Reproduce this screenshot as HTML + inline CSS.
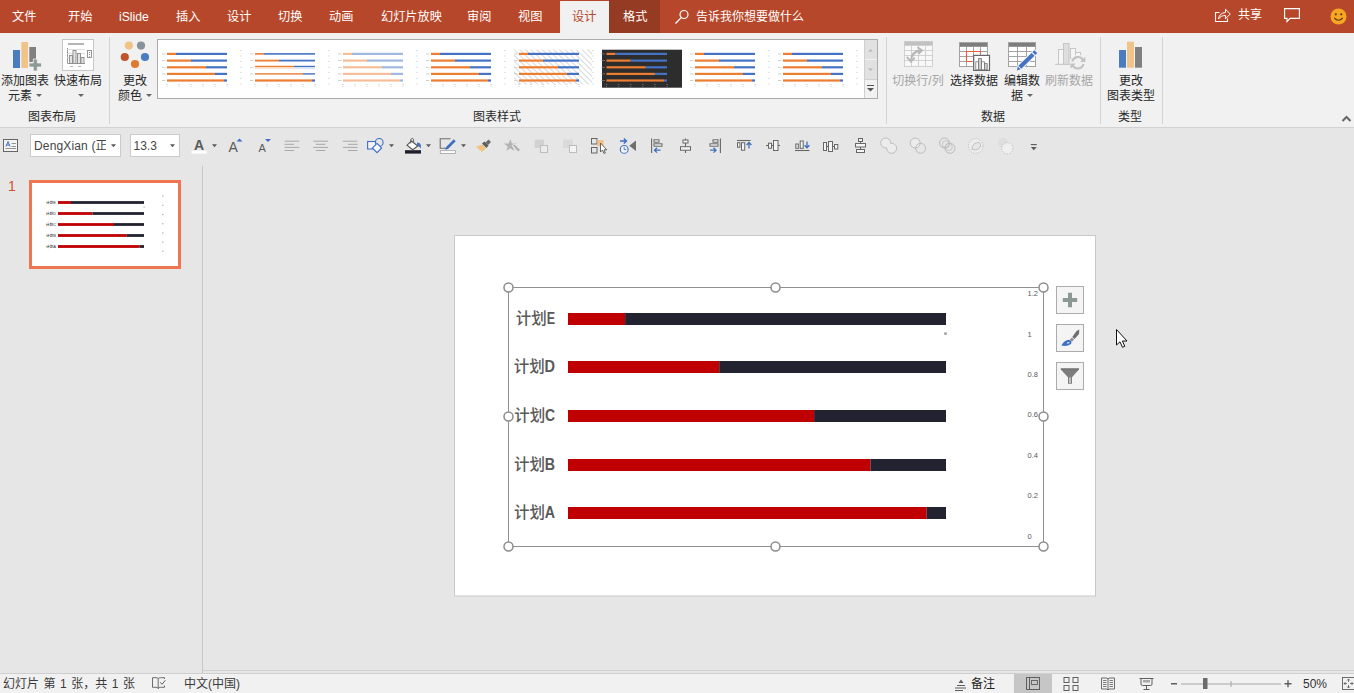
<!DOCTYPE html><html lang="zh-CN"><head><meta charset="utf-8"><title>PowerPoint</title><style>
*{box-sizing:border-box;margin:0;padding:0}
html,body{width:1354px;height:693px;overflow:hidden;background:#e6e6e6}
body{font-family:"Liberation Sans","Noto Sans CJK SC",sans-serif;font-size:12px;color:#262626;position:relative}
.a{position:absolute;white-space:nowrap}
.t{position:absolute;white-space:nowrap;line-height:16px;height:16px}
.c{text-align:center}
#top{left:0;top:0;width:1354px;height:33px;background:#b7472a}
.tab{color:#fff;font-size:12.2px;top:8.500px}
#rib{left:0;top:33px;width:1354px;height:95px;background:#f1f1f1;border-bottom:1px solid #d2d2d2}
.sep{width:1px;background:#d4d4d4;top:37px;height:87px}
.dis{color:#a6a6a6}
.gl{color:#2b2b2b}
#tb{left:0;top:128px;width:1354px;height:38px;background:#e6e6e6}
#status{left:0;top:673px;width:1354px;height:20px;background:#f1f1f1;border-top:1px solid #cfcfcf}
svg{position:absolute;overflow:visible}
</style></head><body>
<div class="a" id="top"></div>
<div class="a" style="left:560px;top:1px;width:49px;height:32px;background:#f1f1f1"></div>
<div class="a" style="left:609px;top:0;width:51px;height:33px;background:#963b23"></div>
<div class="t tab" style="left:12px">文件</div>
<div class="t tab" style="left:68px">开始</div>
<div class="t tab" style="left:119px">iSlide</div>
<div class="t tab" style="left:176px">插入</div>
<div class="t tab" style="left:227px">设计</div>
<div class="t tab" style="left:278px">切换</div>
<div class="t tab" style="left:329px">动画</div>
<div class="t tab" style="left:381px">幻灯片放映</div>
<div class="t tab" style="left:467px">审阅</div>
<div class="t tab" style="left:518px">视图</div>
<div class="t tab" style="left:572px;color:#b7472a">设计</div>
<div class="t tab" style="left:623px">格式</div>
<div class="t tab" style="left:696px;font-size:12px;top:9px">告诉我你想要做什么</div>
<svg style="left:674px;top:9px" width="16" height="16" viewBox="0 0 16 16"><circle cx="10" cy="5.5" r="4" fill="none" stroke="#fff" stroke-width="1.2"/><path d="M7.2 8.6 L1.5 14.5" stroke="#fff" stroke-width="1.3" fill="none"/></svg>
<svg style="left:0;top:0" width="1354" height="40" viewBox="0 0 1354 40"><path d="M1219.500 12.500 H1215.500 V21.500 H1227.500 V18.500" fill="none" stroke="#fff" stroke-width="1.100"/><path d="M1218.500 19 C1219 15 1221.500 12.800 1225.500 12.500 V9.300 L1230.300 14 L1225.500 18.700 V15.500 C1222.500 15.500 1220 16.500 1218.500 19 Z" fill="none" stroke="#fff" stroke-width="1" stroke-linejoin="round"/></svg>
<div class="t tab" style="left:1238px;font-size:12px;top:7px">共享</div>
<svg style="left:1284px;top:8px" width="17" height="15" viewBox="0 0 17 15"><path d="M0.6 0.6 H15.4 V10.4 H6 L3 13.6 V10.4 H0.6 Z" fill="none" stroke="#fff" stroke-width="1.1"/></svg>
<svg style="left:1329.500px;top:7.500px" width="17" height="17" viewBox="0 0 17 17"><circle cx="8.5" cy="8.5" r="8" fill="#f6a623"/><circle cx="5.8" cy="6.3" r="1.1" fill="#5a3a12"/><circle cx="11.2" cy="6.3" r="1.1" fill="#5a3a12"/><path d="M4.3 10 Q8.5 14.5 12.7 10" stroke="#5a3a12" stroke-width="1.1" fill="none"/></svg>
<div class="a" id="rib"></div>
<svg style="left:0;top:0" width="1354" height="693" viewBox="0 0 1354 693"><rect x="13" y="50" width="7" height="18" fill="#4a7dbf"/><rect x="21.3" y="42" width="6.7" height="26" fill="#f0c489"/><rect x="29.3" y="47" width="6.7" height="15" fill="#808080"/><path d="M33 58.5 h4.5 v-4.5 h4 v4.5 h0 M37.5 54 h0" fill="none"/><path d="M33.3 59 v4 h-4.3 v4 h4.3 v4 h4 v-4 h4.2 v-4 h-4.2 v-4 z" fill="#8b9a97" stroke="#f1f1f1" stroke-width="0.8"/><rect x="62.5" y="39.5" width="31" height="31" fill="#fff" stroke="#c6c6c6"/><rect x="68" y="43" width="16" height="2" fill="#b5b5b5"/><path d="M67.5 48 V63.5 H85" fill="none" stroke="#9a9a9a" stroke-width="1"/><path d="M67 49.5h18M67 53.5h18M67 57.5h18" stroke="#d6d6d6" stroke-width="0.8"/><rect x="69.5" y="55.5" width="3" height="8" fill="#e4e4e4" stroke="#8c8c8c" stroke-width="0.9"/><rect x="73" y="50.500" width="3" height="13" fill="#e4e4e4" stroke="#8c8c8c" stroke-width="0.9"/><rect x="77.500" y="53.5" width="3" height="10" fill="#e4e4e4" stroke="#8c8c8c" stroke-width="0.9"/><rect x="81" y="57.5" width="3" height="6" fill="#e4e4e4" stroke="#8c8c8c" stroke-width="0.9"/><rect x="87.5" y="50.5" width="4" height="7" fill="#fff" stroke="#8c8c8c" stroke-width="0.9"/><path d="M89.500 52v1M89.500 54v1M89.500 56v0.600" stroke="#8c8c8c" stroke-width="1"/><path d="M70 66.500h3M78 66.500h3" stroke="#b0b0b0" stroke-width="0.900"/><circle cx="128.9" cy="45.6" r="4.1" fill="#f0c489"/><circle cx="141" cy="45.6" r="4.1" fill="#84949a"/><circle cx="124.8" cy="57" r="4.1" fill="#c0532d"/><circle cx="145" cy="57" r="4.1" fill="#4a7dbf"/><circle cx="135" cy="64" r="4.1" fill="#e07a2f"/></svg>
<div class="t c " style="left:0px;top:72.5px;width:50px;">添加图表</div>
<div class="t c " style="left:0px;top:87.5px;width:50px;">元素<span style="display:inline-block;width:0;height:0;border-left:3px solid transparent;border-right:3px solid transparent;border-top:3px solid #666;vertical-align:middle;margin-left:4px;position:relative;top:-1px"></span></div>
<div class="t c " style="left:53px;top:72.5px;width:50px;">快速布局</div>
<div class="t c " style="left:55.5px;top:87.5px;width:50px;"><span style="display:inline-block;width:0;height:0;border-left:3px solid transparent;border-right:3px solid transparent;border-top:3px solid #666;vertical-align:middle;margin-left:0;position:relative;top:-1px"></span></div>
<div class="t c " style="left:110px;top:72.5px;width:50px;">更改</div>
<div class="t c " style="left:110px;top:87.5px;width:50px;">颜色<span style="display:inline-block;width:0;height:0;border-left:3px solid transparent;border-right:3px solid transparent;border-top:3px solid #666;vertical-align:middle;margin-left:4px;position:relative;top:-1px"></span></div>
<div class="t gl" style="left:28px;top:109px;">图表布局</div>
<div class="a sep" style="left:109px"></div>
<div class="a sep" style="left:886px"></div>
<div class="a sep" style="left:1100px"></div>
<div class="a sep" style="left:1162px"></div>
<div class="t gl" style="left:473px;top:109px;">图表样式</div>
<div class="t gl" style="left:981px;top:109px;">数据</div>
<div class="t gl" style="left:1118px;top:109px;">类型</div>
<div class="a" style="left:157px;top:39px;width:721px;height:60px;background:#fff;border:1px solid #ababab"></div>
<div class="a" style="left:864px;top:40px;width:13px;height:58px;background:#f1f1f1;border-left:1px solid #d0d0d0"></div>
<div class="a" style="left:864px;top:59px;width:13px;height:1px;background:#d0d0d0"></div>
<div class="a" style="left:864px;top:79px;width:13px;height:1px;background:#d0d0d0"></div>
<div class="a" style="left:865px;top:40px;width:12px;height:39px;background:#e1e1e1"></div>
<div class="a" style="left:865px;top:59px;width:12px;height:1px;background:#f1f1f1"></div>
<svg style="left:0;top:0" width="1354" height="693" viewBox="0 0 1354 693"><defs><pattern id="hatch" width="4" height="4" patternUnits="userSpaceOnUse" patternTransform="rotate(-45)"><rect width="4" height="4" fill="#fff"/><rect width="1" height="4" fill="#d9d9d9"/></pattern></defs><path d="M868 51.500 l2.500 -2.500 l2.500 2.500z M868 68.500 l2.500 2.500 l2.500 -2.500z" fill="#b8b8b8"/><path d="M867 85.500h7" stroke="#555" stroke-width="1"/><path d="M867 88 l3.500 3.500 l3.500 -3.500z" fill="#555"/><rect x="167" y="52.80" width="9.0" height="2.2" fill="#ed7d31" opacity="1"/><rect x="176.0" y="52.80" width="51.0" height="2.2" fill="#4472c4" opacity="1"/><rect x="162" y="53.5" width="3.500" height="0.8" fill="#c8c8c8"/><rect x="167" y="59.50" width="24.0" height="2.2" fill="#ed7d31" opacity="1"/><rect x="191.0" y="59.50" width="36.0" height="2.2" fill="#4472c4" opacity="1"/><rect x="162" y="60.2" width="3.500" height="0.8" fill="#c8c8c8"/><rect x="167" y="66.20" width="39.0" height="2.2" fill="#ed7d31" opacity="1"/><rect x="206.0" y="66.20" width="21.0" height="2.2" fill="#4472c4" opacity="1"/><rect x="162" y="66.9" width="3.500" height="0.8" fill="#c8c8c8"/><rect x="167" y="72.80" width="48.0" height="2.2" fill="#ed7d31" opacity="1"/><rect x="215.0" y="72.80" width="12.0" height="2.2" fill="#4472c4" opacity="1"/><rect x="162" y="73.5" width="3.500" height="0.8" fill="#c8c8c8"/><rect x="167" y="79.40" width="57.0" height="2.2" fill="#ed7d31" opacity="1"/><rect x="224.0" y="79.40" width="3.0" height="2.2" fill="#4472c4" opacity="1"/><rect x="162" y="80.1" width="3.500" height="0.8" fill="#c8c8c8"/><rect x="166.2" y="84" width="1.600" height="0.8" fill="#c8c8c8"/><rect x="166.5" y="86" width="1" height="0.8" fill="#c8c8c8"/><rect x="178.2" y="84" width="1.600" height="0.8" fill="#c8c8c8"/><rect x="178.5" y="86" width="1" height="0.8" fill="#c8c8c8"/><rect x="190.2" y="84" width="1.600" height="0.8" fill="#c8c8c8"/><rect x="190.5" y="86" width="1" height="0.8" fill="#c8c8c8"/><rect x="202.2" y="84" width="1.600" height="0.8" fill="#c8c8c8"/><rect x="202.5" y="86" width="1" height="0.8" fill="#c8c8c8"/><rect x="214.2" y="84" width="1.600" height="0.8" fill="#c8c8c8"/><rect x="214.5" y="86" width="1" height="0.8" fill="#c8c8c8"/><rect x="226.2" y="84" width="1.600" height="0.8" fill="#c8c8c8"/><rect x="226.5" y="86" width="1" height="0.8" fill="#c8c8c8"/><rect x="240" y="50.0" width="2" height="0.7" fill="#d4d4d4"/><rect x="240" y="55.6" width="2" height="0.7" fill="#d4d4d4"/><rect x="240" y="61.2" width="2" height="0.7" fill="#d4d4d4"/><rect x="240" y="66.8" width="2" height="0.7" fill="#d4d4d4"/><rect x="240" y="72.4" width="2" height="0.7" fill="#d4d4d4"/><rect x="240" y="78.0" width="2" height="0.7" fill="#d4d4d4"/><rect x="240" y="83.6" width="2" height="0.7" fill="#d4d4d4"/><rect x="255" y="53.10" width="9.0" height="1.6" fill="#ed7d31" opacity="1"/><rect x="264.0" y="53.10" width="51.0" height="1.6" fill="#4472c4" opacity="1"/><rect x="250" y="53.5" width="3.500" height="0.8" fill="#c8c8c8"/><rect x="255" y="59.70" width="24.0" height="1.8" fill="#ed7d31" opacity="1"/><rect x="279.0" y="59.70" width="36.0" height="1.8" fill="#4472c4" opacity="1"/><rect x="250" y="60.2" width="3.500" height="0.8" fill="#c8c8c8"/><rect x="255" y="65.8" width="39.0" height="1.2" fill="#ed7d31"/><rect x="294.0" y="65.8" width="21.0" height="1.2" fill="#4472c4"/><rect x="255" y="67.3" width="39.0" height="1.2" fill="#ed7d31" opacity="0.4"/><rect x="294.0" y="67.3" width="21.0" height="1.2" fill="#4472c4" opacity="0.3"/><rect x="250" y="66.9" width="3.500" height="0.8" fill="#c8c8c8"/><rect x="255" y="73.20" width="48.0" height="1.4" fill="#ed7d31" opacity="1"/><rect x="303.0" y="73.20" width="12.0" height="1.4" fill="#4472c4" opacity="1"/><rect x="250" y="73.5" width="3.500" height="0.8" fill="#c8c8c8"/><rect x="255" y="79.40" width="57.0" height="2.2" fill="#ed7d31" opacity="1"/><rect x="312.0" y="79.40" width="3.0" height="2.2" fill="#4472c4" opacity="1"/><rect x="250" y="80.1" width="3.500" height="0.8" fill="#c8c8c8"/><rect x="254.2" y="84" width="1.600" height="0.8" fill="#c8c8c8"/><rect x="254.5" y="86" width="1" height="0.8" fill="#c8c8c8"/><rect x="266.2" y="84" width="1.600" height="0.8" fill="#c8c8c8"/><rect x="266.5" y="86" width="1" height="0.8" fill="#c8c8c8"/><rect x="278.2" y="84" width="1.600" height="0.8" fill="#c8c8c8"/><rect x="278.5" y="86" width="1" height="0.8" fill="#c8c8c8"/><rect x="290.2" y="84" width="1.600" height="0.8" fill="#c8c8c8"/><rect x="290.5" y="86" width="1" height="0.8" fill="#c8c8c8"/><rect x="302.2" y="84" width="1.600" height="0.8" fill="#c8c8c8"/><rect x="302.5" y="86" width="1" height="0.8" fill="#c8c8c8"/><rect x="314.2" y="84" width="1.600" height="0.8" fill="#c8c8c8"/><rect x="314.5" y="86" width="1" height="0.8" fill="#c8c8c8"/><rect x="328" y="50.0" width="2" height="0.7" fill="#d4d4d4"/><rect x="328" y="55.6" width="2" height="0.7" fill="#d4d4d4"/><rect x="328" y="61.2" width="2" height="0.7" fill="#d4d4d4"/><rect x="328" y="66.8" width="2" height="0.7" fill="#d4d4d4"/><rect x="328" y="72.4" width="2" height="0.7" fill="#d4d4d4"/><rect x="328" y="78.0" width="2" height="0.7" fill="#d4d4d4"/><rect x="328" y="83.6" width="2" height="0.7" fill="#d4d4d4"/><rect x="343" y="52.80" width="9.0" height="2.2" fill="#ed7d31" opacity="0.5"/><rect x="352.0" y="52.80" width="51.0" height="2.2" fill="#4472c4" opacity="0.5"/><rect x="338" y="53.5" width="3.500" height="0.8" fill="#c8c8c8"/><rect x="343" y="59.50" width="24.0" height="2.2" fill="#ed7d31" opacity="0.5"/><rect x="367.0" y="59.50" width="36.0" height="2.2" fill="#4472c4" opacity="0.5"/><rect x="338" y="60.2" width="3.500" height="0.8" fill="#c8c8c8"/><rect x="343" y="66.20" width="39.0" height="2.2" fill="#ed7d31" opacity="0.5"/><rect x="382.0" y="66.20" width="21.0" height="2.2" fill="#4472c4" opacity="0.5"/><rect x="338" y="66.9" width="3.500" height="0.8" fill="#c8c8c8"/><rect x="343" y="72.80" width="48.0" height="2.2" fill="#ed7d31" opacity="0.5"/><rect x="391.0" y="72.80" width="12.0" height="2.2" fill="#4472c4" opacity="0.5"/><rect x="338" y="73.5" width="3.500" height="0.8" fill="#c8c8c8"/><rect x="343" y="79.40" width="57.0" height="2.2" fill="#ed7d31" opacity="0.5"/><rect x="400.0" y="79.40" width="3.0" height="2.2" fill="#4472c4" opacity="0.5"/><rect x="338" y="80.1" width="3.500" height="0.8" fill="#c8c8c8"/><rect x="342.2" y="84" width="1.600" height="0.8" fill="#c8c8c8"/><rect x="342.5" y="86" width="1" height="0.8" fill="#c8c8c8"/><rect x="354.2" y="84" width="1.600" height="0.8" fill="#c8c8c8"/><rect x="354.5" y="86" width="1" height="0.8" fill="#c8c8c8"/><rect x="366.2" y="84" width="1.600" height="0.8" fill="#c8c8c8"/><rect x="366.5" y="86" width="1" height="0.8" fill="#c8c8c8"/><rect x="378.2" y="84" width="1.600" height="0.8" fill="#c8c8c8"/><rect x="378.5" y="86" width="1" height="0.8" fill="#c8c8c8"/><rect x="390.2" y="84" width="1.600" height="0.8" fill="#c8c8c8"/><rect x="390.5" y="86" width="1" height="0.8" fill="#c8c8c8"/><rect x="402.2" y="84" width="1.600" height="0.8" fill="#c8c8c8"/><rect x="402.5" y="86" width="1" height="0.8" fill="#c8c8c8"/><rect x="416" y="50.0" width="2" height="0.7" fill="#d4d4d4"/><rect x="416" y="55.6" width="2" height="0.7" fill="#d4d4d4"/><rect x="416" y="61.2" width="2" height="0.7" fill="#d4d4d4"/><rect x="416" y="66.8" width="2" height="0.7" fill="#d4d4d4"/><rect x="416" y="72.4" width="2" height="0.7" fill="#d4d4d4"/><rect x="416" y="78.0" width="2" height="0.7" fill="#d4d4d4"/><rect x="416" y="83.6" width="2" height="0.7" fill="#d4d4d4"/><rect x="431" y="52.80" width="9.0" height="2.2" fill="#ed7d31" opacity="1"/><rect x="440.0" y="52.80" width="51.0" height="2.2" fill="#4472c4" opacity="1"/><rect x="426" y="53.5" width="3.500" height="0.8" fill="#c8c8c8"/><rect x="431" y="59.50" width="24.0" height="2.2" fill="#ed7d31" opacity="1"/><rect x="455.0" y="59.50" width="36.0" height="2.2" fill="#4472c4" opacity="1"/><rect x="426" y="60.2" width="3.500" height="0.8" fill="#c8c8c8"/><rect x="431" y="66.20" width="39.0" height="2.2" fill="#ed7d31" opacity="1"/><rect x="470.0" y="66.20" width="21.0" height="2.2" fill="#4472c4" opacity="1"/><rect x="426" y="66.9" width="3.500" height="0.8" fill="#c8c8c8"/><rect x="431" y="72.80" width="48.0" height="2.2" fill="#ed7d31" opacity="1"/><rect x="479.0" y="72.80" width="12.0" height="2.2" fill="#4472c4" opacity="1"/><rect x="426" y="73.5" width="3.500" height="0.8" fill="#c8c8c8"/><rect x="431" y="79.40" width="57.0" height="2.2" fill="#ed7d31" opacity="1"/><rect x="488.0" y="79.40" width="3.0" height="2.2" fill="#4472c4" opacity="1"/><rect x="426" y="80.1" width="3.500" height="0.8" fill="#c8c8c8"/><rect x="430.2" y="84" width="1.600" height="0.8" fill="#c8c8c8"/><rect x="430.5" y="86" width="1" height="0.8" fill="#c8c8c8"/><rect x="442.2" y="84" width="1.600" height="0.8" fill="#c8c8c8"/><rect x="442.5" y="86" width="1" height="0.8" fill="#c8c8c8"/><rect x="454.2" y="84" width="1.600" height="0.8" fill="#c8c8c8"/><rect x="454.5" y="86" width="1" height="0.8" fill="#c8c8c8"/><rect x="466.2" y="84" width="1.600" height="0.8" fill="#c8c8c8"/><rect x="466.5" y="86" width="1" height="0.8" fill="#c8c8c8"/><rect x="478.2" y="84" width="1.600" height="0.8" fill="#c8c8c8"/><rect x="478.5" y="86" width="1" height="0.8" fill="#c8c8c8"/><rect x="490.2" y="84" width="1.600" height="0.8" fill="#c8c8c8"/><rect x="490.5" y="86" width="1" height="0.8" fill="#c8c8c8"/><rect x="504" y="50.0" width="2" height="0.7" fill="#d4d4d4"/><rect x="504" y="55.6" width="2" height="0.7" fill="#d4d4d4"/><rect x="504" y="61.2" width="2" height="0.7" fill="#d4d4d4"/><rect x="504" y="66.8" width="2" height="0.7" fill="#d4d4d4"/><rect x="504" y="72.4" width="2" height="0.7" fill="#d4d4d4"/><rect x="504" y="78.0" width="2" height="0.7" fill="#d4d4d4"/><rect x="504" y="83.6" width="2" height="0.7" fill="#d4d4d4"/><rect x="514" y="49.500" width="78" height="35" fill="url(#hatch)"/><rect x="519" y="52.80" width="9.0" height="2.2" fill="#ed7d31" opacity="1"/><rect x="528.0" y="52.80" width="51.0" height="2.2" fill="#4472c4" opacity="1"/><rect x="514" y="53.5" width="3.500" height="0.8" fill="#c8c8c8"/><rect x="519" y="59.50" width="24.0" height="2.2" fill="#ed7d31" opacity="1"/><rect x="543.0" y="59.50" width="36.0" height="2.2" fill="#4472c4" opacity="1"/><rect x="514" y="60.2" width="3.500" height="0.8" fill="#c8c8c8"/><rect x="519" y="66.20" width="39.0" height="2.2" fill="#ed7d31" opacity="1"/><rect x="558.0" y="66.20" width="21.0" height="2.2" fill="#4472c4" opacity="1"/><rect x="514" y="66.9" width="3.500" height="0.8" fill="#c8c8c8"/><rect x="519" y="72.80" width="48.0" height="2.2" fill="#ed7d31" opacity="1"/><rect x="567.0" y="72.80" width="12.0" height="2.2" fill="#4472c4" opacity="1"/><rect x="514" y="73.5" width="3.500" height="0.8" fill="#c8c8c8"/><rect x="519" y="79.40" width="57.0" height="2.2" fill="#ed7d31" opacity="1"/><rect x="576.0" y="79.40" width="3.0" height="2.2" fill="#4472c4" opacity="1"/><rect x="514" y="80.1" width="3.500" height="0.8" fill="#c8c8c8"/><rect x="518.2" y="84" width="1.600" height="0.8" fill="#c8c8c8"/><rect x="518.5" y="86" width="1" height="0.8" fill="#c8c8c8"/><rect x="530.2" y="84" width="1.600" height="0.8" fill="#c8c8c8"/><rect x="530.5" y="86" width="1" height="0.8" fill="#c8c8c8"/><rect x="542.2" y="84" width="1.600" height="0.8" fill="#c8c8c8"/><rect x="542.5" y="86" width="1" height="0.8" fill="#c8c8c8"/><rect x="554.2" y="84" width="1.600" height="0.8" fill="#c8c8c8"/><rect x="554.5" y="86" width="1" height="0.8" fill="#c8c8c8"/><rect x="566.2" y="84" width="1.600" height="0.8" fill="#c8c8c8"/><rect x="566.5" y="86" width="1" height="0.8" fill="#c8c8c8"/><rect x="578.2" y="84" width="1.600" height="0.8" fill="#c8c8c8"/><rect x="578.5" y="86" width="1" height="0.8" fill="#c8c8c8"/><rect x="592" y="50.0" width="2" height="0.7" fill="#d4d4d4"/><rect x="592" y="55.6" width="2" height="0.7" fill="#d4d4d4"/><rect x="592" y="61.2" width="2" height="0.7" fill="#d4d4d4"/><rect x="592" y="66.8" width="2" height="0.7" fill="#d4d4d4"/><rect x="592" y="72.4" width="2" height="0.7" fill="#d4d4d4"/><rect x="592" y="78.0" width="2" height="0.7" fill="#d4d4d4"/><rect x="592" y="83.6" width="2" height="0.7" fill="#d4d4d4"/><rect x="602" y="49.700" width="80" height="38" fill="#2d2d2d"/><rect x="606.5" y="52.80" width="9.1" height="2.2" fill="#ed7d31" opacity="1"/><rect x="615.6" y="52.80" width="51.4" height="2.2" fill="#4472c4" opacity="1"/><rect x="601.5" y="53.5" width="3.500" height="0.8" fill="#777"/><rect x="606.5" y="59.50" width="24.2" height="2.2" fill="#ed7d31" opacity="1"/><rect x="630.7" y="59.50" width="36.3" height="2.2" fill="#4472c4" opacity="1"/><rect x="601.5" y="60.2" width="3.500" height="0.8" fill="#777"/><rect x="606.5" y="66.20" width="39.3" height="2.2" fill="#ed7d31" opacity="1"/><rect x="645.8" y="66.20" width="21.2" height="2.2" fill="#4472c4" opacity="1"/><rect x="601.5" y="66.9" width="3.500" height="0.8" fill="#777"/><rect x="606.5" y="72.80" width="48.4" height="2.2" fill="#ed7d31" opacity="1"/><rect x="654.9" y="72.80" width="12.1" height="2.2" fill="#4472c4" opacity="1"/><rect x="601.5" y="73.5" width="3.500" height="0.8" fill="#777"/><rect x="606.5" y="79.40" width="57.5" height="2.2" fill="#ed7d31" opacity="1"/><rect x="664.0" y="79.40" width="3.0" height="2.2" fill="#4472c4" opacity="1"/><rect x="601.5" y="80.1" width="3.500" height="0.8" fill="#777"/><rect x="605.7" y="84" width="1.600" height="0.8" fill="#777"/><rect x="606.0" y="86" width="1" height="0.8" fill="#777"/><rect x="617.8" y="84" width="1.600" height="0.8" fill="#777"/><rect x="618.1" y="86" width="1" height="0.8" fill="#777"/><rect x="629.9" y="84" width="1.600" height="0.8" fill="#777"/><rect x="630.2" y="86" width="1" height="0.8" fill="#777"/><rect x="642.0" y="84" width="1.600" height="0.8" fill="#777"/><rect x="642.3" y="86" width="1" height="0.8" fill="#777"/><rect x="654.1" y="84" width="1.600" height="0.8" fill="#777"/><rect x="654.4" y="86" width="1" height="0.8" fill="#777"/><rect x="666.2" y="84" width="1.600" height="0.8" fill="#777"/><rect x="666.5" y="86" width="1" height="0.8" fill="#777"/><rect x="695" y="52.80" width="9.0" height="2.2" fill="#ed7d31" opacity="1"/><rect x="704.0" y="52.80" width="51.0" height="2.2" fill="#4472c4" opacity="1"/><rect x="690" y="53.5" width="3.500" height="0.8" fill="#c8c8c8"/><rect x="695" y="59.50" width="24.0" height="2.2" fill="#ed7d31" opacity="1"/><rect x="719.0" y="59.50" width="36.0" height="2.2" fill="#4472c4" opacity="1"/><rect x="690" y="60.2" width="3.500" height="0.8" fill="#c8c8c8"/><rect x="695" y="66.20" width="39.0" height="2.2" fill="#ed7d31" opacity="1"/><rect x="734.0" y="66.20" width="21.0" height="2.2" fill="#4472c4" opacity="1"/><rect x="690" y="66.9" width="3.500" height="0.8" fill="#c8c8c8"/><rect x="695" y="72.80" width="48.0" height="2.2" fill="#ed7d31" opacity="1"/><rect x="743.0" y="72.80" width="12.0" height="2.2" fill="#4472c4" opacity="1"/><rect x="690" y="73.5" width="3.500" height="0.8" fill="#c8c8c8"/><rect x="695" y="79.40" width="57.0" height="2.2" fill="#ed7d31" opacity="1"/><rect x="752.0" y="79.40" width="3.0" height="2.2" fill="#4472c4" opacity="1"/><rect x="690" y="80.1" width="3.500" height="0.8" fill="#c8c8c8"/><rect x="694.2" y="84" width="1.600" height="0.8" fill="#c8c8c8"/><rect x="694.5" y="86" width="1" height="0.8" fill="#c8c8c8"/><rect x="706.2" y="84" width="1.600" height="0.8" fill="#c8c8c8"/><rect x="706.5" y="86" width="1" height="0.8" fill="#c8c8c8"/><rect x="718.2" y="84" width="1.600" height="0.8" fill="#c8c8c8"/><rect x="718.5" y="86" width="1" height="0.8" fill="#c8c8c8"/><rect x="730.2" y="84" width="1.600" height="0.8" fill="#c8c8c8"/><rect x="730.5" y="86" width="1" height="0.8" fill="#c8c8c8"/><rect x="742.2" y="84" width="1.600" height="0.8" fill="#c8c8c8"/><rect x="742.5" y="86" width="1" height="0.8" fill="#c8c8c8"/><rect x="754.2" y="84" width="1.600" height="0.8" fill="#c8c8c8"/><rect x="754.5" y="86" width="1" height="0.8" fill="#c8c8c8"/><rect x="768" y="50.0" width="2" height="0.7" fill="#d4d4d4"/><rect x="768" y="55.6" width="2" height="0.7" fill="#d4d4d4"/><rect x="768" y="61.2" width="2" height="0.7" fill="#d4d4d4"/><rect x="768" y="66.8" width="2" height="0.7" fill="#d4d4d4"/><rect x="768" y="72.4" width="2" height="0.7" fill="#d4d4d4"/><rect x="768" y="78.0" width="2" height="0.7" fill="#d4d4d4"/><rect x="768" y="83.6" width="2" height="0.7" fill="#d4d4d4"/><rect x="783" y="52.80" width="9.0" height="2.2" fill="#ed7d31" opacity="1"/><rect x="792.0" y="52.80" width="51.0" height="2.2" fill="#4472c4" opacity="1"/><rect x="778" y="53.5" width="3.500" height="0.8" fill="#c8c8c8"/><rect x="783" y="59.50" width="24.0" height="2.2" fill="#ed7d31" opacity="1"/><rect x="807.0" y="59.50" width="36.0" height="2.2" fill="#4472c4" opacity="1"/><rect x="778" y="60.2" width="3.500" height="0.8" fill="#c8c8c8"/><rect x="783" y="66.20" width="39.0" height="2.2" fill="#ed7d31" opacity="1"/><rect x="822.0" y="66.20" width="21.0" height="2.2" fill="#4472c4" opacity="1"/><rect x="778" y="66.9" width="3.500" height="0.8" fill="#c8c8c8"/><rect x="783" y="72.80" width="48.0" height="2.2" fill="#ed7d31" opacity="1"/><rect x="831.0" y="72.80" width="12.0" height="2.2" fill="#4472c4" opacity="1"/><rect x="778" y="73.5" width="3.500" height="0.8" fill="#c8c8c8"/><rect x="783" y="79.40" width="57.0" height="2.2" fill="#ed7d31" opacity="1"/><rect x="840.0" y="79.40" width="3.0" height="2.2" fill="#4472c4" opacity="1"/><rect x="778" y="80.1" width="3.500" height="0.8" fill="#c8c8c8"/><rect x="782.2" y="84" width="1.600" height="0.8" fill="#c8c8c8"/><rect x="782.5" y="86" width="1" height="0.8" fill="#c8c8c8"/><rect x="794.2" y="84" width="1.600" height="0.8" fill="#c8c8c8"/><rect x="794.5" y="86" width="1" height="0.8" fill="#c8c8c8"/><rect x="806.2" y="84" width="1.600" height="0.8" fill="#c8c8c8"/><rect x="806.5" y="86" width="1" height="0.8" fill="#c8c8c8"/><rect x="818.2" y="84" width="1.600" height="0.8" fill="#c8c8c8"/><rect x="818.5" y="86" width="1" height="0.8" fill="#c8c8c8"/><rect x="830.2" y="84" width="1.600" height="0.8" fill="#c8c8c8"/><rect x="830.5" y="86" width="1" height="0.8" fill="#c8c8c8"/><rect x="842.2" y="84" width="1.600" height="0.8" fill="#c8c8c8"/><rect x="842.5" y="86" width="1" height="0.8" fill="#c8c8c8"/><rect x="856" y="50.0" width="2" height="0.7" fill="#d4d4d4"/><rect x="856" y="55.6" width="2" height="0.7" fill="#d4d4d4"/><rect x="856" y="61.2" width="2" height="0.7" fill="#d4d4d4"/><rect x="856" y="66.8" width="2" height="0.7" fill="#d4d4d4"/><rect x="856" y="72.4" width="2" height="0.7" fill="#d4d4d4"/><rect x="856" y="78.0" width="2" height="0.7" fill="#d4d4d4"/><rect x="856" y="83.6" width="2" height="0.7" fill="#d4d4d4"/></svg>
<svg style="left:0;top:0" width="1354" height="693" viewBox="0 0 1354 693"><rect x="904" y="41" width="29" height="26" fill="#f8f8f8"/><rect x="904" y="41" width="29" height="4.7" fill="#c1c1c1"/><rect x="904.5" y="41.5" width="28" height="25" fill="none" stroke="#cdcdcd" stroke-width="0.9"/><path d="M911.5 45.7V67M918.5 45.7V67M925.5 45.7V67M904 50.5H933M904 55.5H933M904 60.5H933" stroke="#cdcdcd" stroke-width="0.9" fill="none"/><path d="M911 60.500 C911.500 55 915 51 921 50.400" fill="none" stroke="#b7b7b7" stroke-width="2.100"/><path d="M906.800 56.800 L911 61.600 L914.800 57.700 M917.300 47.300 L922 50.300 L918.500 53.800" fill="none" stroke="#b7b7b7" stroke-width="1.900"/><rect x="959" y="42" width="29" height="25" fill="#fff"/><rect x="959" y="42" width="29" height="4.8" fill="#7d7d7d"/><rect x="959.5" y="42.5" width="28" height="24" fill="none" stroke="#a3a3a3" stroke-width="1"/><path d="M966.5 46.8V67M973.5 46.8V67M980.5 46.8V67M959 51.5H988M959 56.5H988M959 61.5H988" stroke="#a3a3a3" stroke-width="1" fill="none"/><path d="M966.500 61.500 V51.500 H980.500 V54 M966.500 61.500 H972" fill="none" stroke="#e8603c" stroke-width="1.100"/><rect x="973.700" y="55.400" width="15.800" height="15" fill="#fff" stroke="#666" stroke-width="1.200"/><rect x="975.800" y="61.800" width="2.800" height="8" fill="#fff" stroke="#757575" stroke-width="0.800"/><rect x="978.600" y="58.600" width="2.900" height="11.200" fill="#cdcdcd" stroke="#757575" stroke-width="0.800"/><rect x="981.500" y="61.800" width="2.900" height="8" fill="#fff" stroke="#757575" stroke-width="0.800"/><rect x="984.400" y="63.600" width="2.800" height="6.200" fill="#cdcdcd" stroke="#757575" stroke-width="0.800"/><rect x="1008" y="42" width="28" height="25" fill="#fff"/><rect x="1008" y="42" width="28" height="4.8" fill="#7d7d7d"/><rect x="1008.5" y="42.5" width="27" height="24" fill="none" stroke="#a3a3a3" stroke-width="1"/><path d="M1017.5 46.8V67M1026.5 46.8V67M1008 51.5H1036M1008 56.5H1036M1008 61.5H1036" stroke="#a3a3a3" stroke-width="1" fill="none"/><path d="M1034.300 49.800 L1037.600 53.100 L1020.800 69.500 L1016.700 70.800 L1017.800 66.500 Z" fill="#f1f1f1" stroke="#f1f1f1" stroke-width="1.600"/><path d="M1034.300 50.200 L1037.200 53.100 L1035.300 55 L1032.400 52.100 Z M1031.600 52.900 L1034.500 55.800 L1021.300 68.700 L1018.400 65.800 Z M1017.800 66.600 L1020.500 69.300 L1016.900 70.500 Z" fill="#4472c4"/><path d="M1055 64.300 H1070" stroke="#c6c6c6"/><rect x="1058.500" y="49.500" width="5" height="14.800" fill="#f6f6f6" stroke="#c6c6c6"/><rect x="1063.500" y="43.500" width="5.500" height="20.800" fill="#dedede" stroke="#c6c6c6"/><rect x="1070.500" y="48.500" width="5" height="10" fill="#f6f6f6" stroke="#c6c6c6"/><rect x="1075.500" y="52.500" width="5" height="5" fill="#f6f6f6" stroke="#c6c6c6"/><circle cx="1077.900" cy="62.700" r="8" fill="#f1f1f1"/><path d="M1072.300 61.500 A5.800 5.800 0 0 1 1083 60 M1083.500 64 A5.800 5.800 0 0 1 1072.800 65.500" fill="none" stroke="#c2c2c2" stroke-width="2.200"/><path d="M1085.300 56.800 v5.200 h-5.200z M1070.500 68.700 v-5.200 h5.200z" fill="#c2c2c2"/><rect x="1119" y="50" width="7" height="17.700" fill="#4a7dbf"/><rect x="1127" y="41.700" width="7" height="26" fill="#f0c489"/><rect x="1135" y="47" width="7" height="20.700" fill="#808080"/></svg>
<div class="t c dis" style="left:888px;top:72.5px;width:60px;">切换行/列</div>
<div class="t c " style="left:944px;top:72.5px;width:60px;">选择数据</div>
<div class="t c " style="left:992px;top:72.5px;width:60px;">编辑数</div>
<div class="t c " style="left:992px;top:87.5px;width:60px;">据<span style="display:inline-block;width:0;height:0;border-left:3px solid transparent;border-right:3px solid transparent;border-top:3px solid #666;vertical-align:middle;margin-left:4px;position:relative;top:-1px"></span></div>
<div class="t c dis" style="left:1039px;top:72.5px;width:60px;">刷新数据</div>
<div class="t c " style="left:1101px;top:72.5px;width:60px;">更改</div>
<div class="t c " style="left:1101px;top:87.5px;width:60px;">图表类型</div>
<svg style="left:1340px;top:115px" width="10" height="8" viewBox="0 0 10 8"><path d="M2.500 6 L6.500 2 L10.500 6" fill="none" stroke="#666" stroke-width="2"/></svg>
<div class="a" id="tb"></div>
<svg style="left:0;top:0" width="1354" height="693" viewBox="0 0 1354 693"><rect x="3.5" y="139.5" width="14" height="12" fill="#f4f4f4" stroke="#666"/><path d="M6 146.500 L8 141.500 L10 146.500 M6.800 145 h2.500" fill="none" stroke="#3f6fc0" stroke-width="1"/><path d="M11.500 143.500 h4.500 M11.500 146.500 h4.500 M5.500 148.500 h10.500" stroke="#8a8a8a" stroke-width="0.900"/><rect x="30.500" y="134.500" width="90" height="22" fill="#fff" stroke="#cbcbcb"/><rect x="130.500" y="134.500" width="49" height="22" fill="#fff" stroke="#cbcbcb"/><path d="M111 144.2 h5 l-2.500 3z" fill="#5a5a5a"/><path d="M170 144.2 h5 l-2.500 3z" fill="#5a5a5a"/><rect x="191.500" y="150.600" width="15.200" height="3" fill="#fff"/><path d="M212 144.2 h5 l-2.500 3z" fill="#5a5a5a"/><path d="M236.500 141.600 l3 -3 l3 3z" fill="#3f6fc0"/><path d="M265 139 h6 l-3 3z" fill="#3f6fc0"/><rect x="284.6" y="140.7" width="14.7" height="1" fill="#a9a9a9"/><rect x="284.6" y="143.8" width="9.5" height="1" fill="#a9a9a9"/><rect x="284.6" y="146.9" width="14.7" height="1" fill="#a9a9a9"/><rect x="284.6" y="150.0" width="9.5" height="1" fill="#a9a9a9"/><rect x="313.3" y="140.7" width="14.7" height="1" fill="#a9a9a9"/><rect x="315.9" y="143.8" width="9.5" height="1" fill="#a9a9a9"/><rect x="313.3" y="146.9" width="14.7" height="1" fill="#a9a9a9"/><rect x="315.9" y="150.0" width="9.5" height="1" fill="#a9a9a9"/><rect x="342.8" y="140.7" width="14.7" height="1" fill="#a9a9a9"/><rect x="348.0" y="143.8" width="9.5" height="1" fill="#a9a9a9"/><rect x="342.8" y="146.9" width="14.7" height="1" fill="#a9a9a9"/><rect x="348.0" y="150.0" width="9.5" height="1" fill="#a9a9a9"/><circle cx="379.200" cy="142.400" r="3.900" fill="none" stroke="#3f6fc0" stroke-width="1.100"/><rect x="367.600" y="141.500" width="8" height="7.500" fill="#f2f2f2" stroke="#3f6fc0" stroke-width="1.100"/><path d="M377 143.400 L381.700 148 L377 152.700 L372.400 148 Z" fill="#f6f6f6" stroke="#3f6fc0" stroke-width="1.100"/><path d="M389 144.2 h5 l-2.500 3z" fill="#5a5a5a"/><rect x="405" y="150.200" width="16" height="3.400" fill="#1e1e2d"/><path d="M417 142.600 C420.500 142.600 421.600 145.500 420.800 148.600 C419.800 146.600 418.500 146.200 417.300 146.300z" fill="#3f6fc0"/><path d="M411.400 141 L417.800 146 L412.700 149.700 L407 145.200 Z" fill="#fff" stroke="#555" stroke-width="1.100"/><path d="M410.800 143.500 V139.300 Q412.200 137.600 413.600 139.300 V142.500" fill="none" stroke="#555" stroke-width="0.900"/><path d="M426 144.2 h5 l-2.500 3z" fill="#5a5a5a"/><path d="M450.500 138.800 H440.200 V148.300 H446" fill="none" stroke="#6e6e6e" stroke-width="1.100"/><rect x="440.300" y="150.700" width="15.200" height="2.800" fill="#fff" stroke="#a0a0a0" stroke-width="0.800"/><path d="M453.800 139.300 L455.700 141.200 L448 148.900 L445.200 149.800 L446.100 147 Z" fill="#3f6fc0"/><path d="M461 144.2 h5 l-2.500 3z" fill="#5a5a5a"/><path d="M476 146.500 L482.500 144.500 L486 148.500 L482 152 Q479 149.500 476 146.500z" fill="#f2c47f"/><path d="M482 143.500 L484.500 141.500 L488.500 145.500 L486.500 148z" fill="#5c5c5c"/><path d="M485.500 142.500 L488.500 139.500 L491 142 L488 145z" fill="#6a6a6a"/><path d="M510.3 139.0 L511.9 143.4 L516.6 143.6 L512.9 146.4 L514.2 150.9 L510.3 148.3 L506.4 150.9 L507.7 146.4 L504.0 143.6 L508.7 143.4 Z" fill="#b4b4b4"/><path d="M512.800 144.500 L520 150.500" stroke="#e6e6e6" stroke-width="4"/><path d="M513.500 145 L516.300 147.300" stroke="#a8a8a8" stroke-width="1.500"/><path d="M516 146.300 L520 149.700 L518.300 151.500 L514.800 148 Z" fill="#b0b0b0"/><rect x="534.600" y="139.600" width="9.500" height="8.300" fill="#d2d2d2"/><rect x="540.500" y="145.500" width="7" height="7" fill="#ececec" stroke="#bcbcbc"/><rect x="563" y="139.600" width="10" height="8.300" fill="#dadada"/><rect x="569.500" y="145.500" width="7" height="7" fill="#f4f4f4" stroke="#bcbcbc"/><rect x="591.500" y="138.500" width="5.500" height="5.500" fill="none" stroke="#666" stroke-width="1"/><rect x="591.500" y="147.500" width="5.500" height="5.500" fill="none" stroke="#666" stroke-width="1"/><rect x="597.400" y="140" width="6.200" height="6.300" fill="#f2c08a"/><path d="M600.500 143 V152 L602.500 150 L604 153.500 L605.300 153 L604 149.800 L606.800 149.800 Z" fill="#fff" stroke="#555" stroke-width="0.900"/><path d="M620 141 H626 M623.800 138.500 L626.500 141 L623.800 143.500" fill="none" stroke="#3f6fc0" stroke-width="1.400"/><circle cx="624.200" cy="149.400" r="3.900" fill="#f4f4f4" stroke="#3f6fc0" stroke-width="1.100"/><path d="M624.200 147 V149.600 H626.200" fill="none" stroke="#3f6fc0" stroke-width="0.900"/><path d="M636 140.500 V151 L629.300 145.800 Z" fill="#6e6e6e"/><path d="M651.600 138.500 V153" stroke="#666" stroke-width="1.100"/><rect x="654" y="139.800" width="5" height="2.400" fill="#f4f4f4" stroke="#666"/><rect x="654" y="143.800" width="8" height="2.400" fill="#f4f4f4" stroke="#666"/><path d="M654.500 150.200 H660.500 M657 147.800 L654.500 150.200 L657 152.600" fill="none" stroke="#3f6fc0" stroke-width="1.300"/><path d="M685.500 138.500 V153" stroke="#666" stroke-width="1.100"/><rect x="683" y="140" width="5" height="3" fill="#f4f4f4" stroke="#666"/><rect x="680.500" y="146.700" width="10" height="3.500" fill="#f4f4f4" stroke="#666"/><path d="M720.400 138.500 V153" stroke="#666" stroke-width="1.100"/><rect x="713" y="139.800" width="5" height="2.400" fill="#f4f4f4" stroke="#666"/><rect x="710" y="143.800" width="8" height="2.400" fill="#f4f4f4" stroke="#666"/><path d="M710 150.200 H716 M713.500 147.800 L716 150.200 L713.500 152.600" fill="none" stroke="#3f6fc0" stroke-width="1.300"/><path d="M737 140.500 H750.600" stroke="#666" stroke-width="1.100"/><rect x="737.500" y="142.700" width="2.400" height="4.500" fill="#f4f4f4" stroke="#666"/><rect x="741.500" y="142.700" width="3.200" height="7.500" fill="#f4f4f4" stroke="#666"/><path d="M749 148.500 V142.500 M746.600 145 L749 142.500 L751.400 145" fill="none" stroke="#3f6fc0" stroke-width="1.300"/><path d="M766 145.500 H780" stroke="#666" stroke-width="1.100"/><rect x="768.500" y="143.200" width="3" height="5" fill="#f4f4f4" stroke="#666"/><rect x="773.500" y="140.500" width="4.500" height="10" fill="#f4f4f4" stroke="#666"/><path d="M795 150.500 H809.500" stroke="#666" stroke-width="1.100"/><rect x="795.800" y="144" width="2.500" height="4.300" fill="#f4f4f4" stroke="#666"/><rect x="800.200" y="141" width="3" height="7.300" fill="#f4f4f4" stroke="#666"/><path d="M807 141.500 V147.800 M804.600 145.300 L807 147.800 L809.400 145.300" fill="none" stroke="#3f6fc0" stroke-width="1.300"/><path d="M826 146.500 H835" stroke="#666" stroke-width="1"/><rect x="823.500" y="142.500" width="3" height="8" fill="#f4f4f4" stroke="#666"/><rect x="828.500" y="141.500" width="4" height="10" fill="#f4f4f4" stroke="#666"/><rect x="834.500" y="144.500" width="3.300" height="4.500" fill="#f4f4f4" stroke="#666"/><path d="M860.500 141 V150" stroke="#666" stroke-width="1"/><rect x="858.500" y="138.500" width="4" height="3" fill="#f4f4f4" stroke="#666"/><rect x="855.500" y="143.500" width="10" height="3.500" fill="#f4f4f4" stroke="#666"/><rect x="856.500" y="149.500" width="8" height="3" fill="#f4f4f4" stroke="#666"/><path d="M886.700 147.900 A5 5 0 1 1 890.700 143.400 A5 5 0 1 1 886.700 147.900 Z" fill="#ececec" stroke="#bcbcbc" stroke-width="1"/><circle cx="915.200" cy="143" r="5" fill="#ececec" stroke="#bcbcbc"/><circle cx="920.600" cy="148.300" r="5" fill="none" stroke="#bcbcbc"/><circle cx="944.500" cy="143" r="5" fill="none" stroke="#bcbcbc"/><circle cx="950" cy="148.300" r="5" fill="none" stroke="#bcbcbc"/><circle cx="945.800" cy="144.300" r="3.600" fill="none" stroke="#bcbcbc" stroke-width="0.800"/><circle cx="948.700" cy="147" r="3.600" fill="none" stroke="#bcbcbc" stroke-width="0.800"/><circle cx="975.800" cy="146" r="7.300" fill="#ededed" stroke="#bcbcbc" stroke-dasharray="1.200 1.400"/><path d="M972 149.500 Q971.500 144 977.500 142.500 Q981 142 980.500 146 Q979 151 972 149.500z" fill="#e6e6e6" stroke="#bcbcbc" stroke-width="0.900"/><circle cx="1003" cy="143" r="5.200" fill="#dedede"/><circle cx="1007.300" cy="148.300" r="5.600" fill="#efefef" stroke="#bcbcbc" stroke-dasharray="1.200 1.400"/><path d="M1030.800 144.600 h6" stroke="#5a5a5a" stroke-width="1.100"/><path d="M1030.800 147 h6 l-3 3.200z" fill="#5a5a5a"/></svg>
<div class="t" style="left:34px;top:137.500px;font-size:12px;color:#444;letter-spacing:0.150px;width:72.300px;overflow:hidden">DengXian (正</div>
<div class="t" style="left:133.500px;top:137.500px;font-size:12px;color:#444">13.3</div>
<div class="t" style="left:194px;top:136.500px;font-size:14px;font-weight:bold;color:#5a5a5a">A</div>
<div class="t" style="left:228.500px;top:138.500px;font-size:14px;color:#5a5a5a">A</div>
<div class="t" style="left:258.500px;top:140px;font-size:11px;color:#5a5a5a">A</div>
<div class="a" style="left:202px;top:166px;width:1px;height:507px;background:#c6c6c6"></div>
<div class="a" style="left:203px;top:670px;width:1151px;height:1px;background:#d0d0d0"></div>
<div class="t" style="left:8px;top:178px;font-size:14px;color:#d24f2b">1</div>
<div class="a" style="left:29px;top:180px;width:152px;height:89px;background:#fff;border:3px solid #ef7651"></div>
<svg style="left:0;top:0" width="1354" height="693" viewBox="0 0 1354 693"><rect x="58" y="201.1" width="13.0" height="2.800" fill="#c00000"/><rect x="71.0" y="201.1" width="73.0" height="2.800" fill="#232230"/><rect x="58" y="212.1" width="34.4" height="2.800" fill="#c00000"/><rect x="92.4" y="212.1" width="51.6" height="2.800" fill="#232230"/><rect x="58" y="223.1" width="56.0" height="2.800" fill="#c00000"/><rect x="114.0" y="223.1" width="30.0" height="2.800" fill="#232230"/><rect x="58" y="234.1" width="68.8" height="2.800" fill="#c00000"/><rect x="126.8" y="234.1" width="17.2" height="2.800" fill="#232230"/><rect x="58" y="245.1" width="81.6" height="2.800" fill="#c00000"/><rect x="139.6" y="245.1" width="4.4" height="2.800" fill="#232230"/><rect x="162" y="195.5" width="1.500" height="1.200" fill="#b5b5b5"/><rect x="162" y="204.7" width="1.500" height="1.200" fill="#b5b5b5"/><rect x="162" y="213.9" width="1.500" height="1.200" fill="#b5b5b5"/><rect x="162" y="223.1" width="1.500" height="1.200" fill="#b5b5b5"/><rect x="162" y="232.3" width="1.500" height="1.200" fill="#b5b5b5"/><rect x="162" y="241.5" width="1.500" height="1.200" fill="#b5b5b5"/><rect x="162" y="250.7" width="1.500" height="1.200" fill="#b5b5b5"/><rect x="143.500" y="206.500" width="1.200" height="1.200" fill="#b0b0b0"/><rect x="454.500" y="235.500" width="641" height="360.500" fill="#fff" stroke="#c9c9c9"/><rect x="568" y="313" width="57.1" height="12" fill="#c00000"/><rect x="625.1" y="313" width="320.9" height="12" fill="#232230"/><rect x="568" y="361" width="151.2" height="12" fill="#c00000"/><rect x="719.2" y="361" width="226.8" height="12" fill="#232230"/><rect x="568" y="410" width="246.1" height="12" fill="#c00000"/><rect x="814.1" y="410" width="131.9" height="12" fill="#232230"/><rect x="568" y="459" width="302.4" height="12" fill="#c00000"/><rect x="870.4" y="459" width="75.6" height="12" fill="#232230"/><rect x="568" y="507" width="358.7" height="12" fill="#c00000"/><rect x="926.7" y="507" width="19.3" height="12" fill="#232230"/><rect x="944.200" y="332.300" width="2.600" height="2.600" fill="#a3a3a3"/><rect x="508.500" y="287.500" width="535" height="259" fill="none" stroke="#919191" stroke-width="1"/><circle cx="508.5" cy="287.5" r="4.500" fill="#fff" stroke="#8c8c8c" stroke-width="1.500"/><circle cx="775.5" cy="287.5" r="4.500" fill="#fff" stroke="#8c8c8c" stroke-width="1.500"/><circle cx="1043.5" cy="287.5" r="4.500" fill="#fff" stroke="#8c8c8c" stroke-width="1.500"/><circle cx="508.5" cy="416.5" r="4.500" fill="#fff" stroke="#8c8c8c" stroke-width="1.500"/><circle cx="1043.5" cy="416.5" r="4.500" fill="#fff" stroke="#8c8c8c" stroke-width="1.500"/><circle cx="508.5" cy="546.5" r="4.500" fill="#fff" stroke="#8c8c8c" stroke-width="1.500"/><circle cx="775.5" cy="546.5" r="4.500" fill="#fff" stroke="#8c8c8c" stroke-width="1.500"/><circle cx="1043.5" cy="546.5" r="4.500" fill="#fff" stroke="#8c8c8c" stroke-width="1.500"/><rect x="1056.500" y="286.5" width="27" height="27" fill="#f4f4f4" stroke="#ababab"/><rect x="1056.500" y="324.5" width="27" height="27" fill="#f4f4f4" stroke="#ababab"/><rect x="1056.500" y="362.5" width="27" height="27" fill="#f4f4f4" stroke="#ababab"/><path d="M1068 292.800 h4 v5.200 h5.200 v4 h-5.200 v5.200 h-4 v-5.200 h-5.200 v-4 h5.200 z" fill="#8b9893"/><path d="M1079.300 329.500 L1079 334 L1074.500 339 L1072.300 337 L1076.500 331 Z" fill="#6e6e6e"/><path d="M1071.800 337.500 L1074 339.600 L1072 341.800 L1069.800 339.700 Z" fill="#8f8f8f"/><path d="M1061.300 345.600 Q1064.500 340 1069 339.800 Q1072.500 341 1071 344 Q1067 346.800 1061.300 345.600z" fill="#3f6fc0"/><path d="M1066.500 343.500 Q1068 341.500 1069.800 342.200 Q1069.500 344 1066.500 343.500z" fill="#e8eefa"/><path d="M1060.800 368.500 H1079 V369.500 L1072 377.200 V383.800 H1068 V377.200 L1060.800 369.500 Z" fill="#7d7d7d"/><path d="M1070 377.500 V383" stroke="#e0e0e0" stroke-width="1.400"/><path d="M1060.800 369 H1079" stroke="#6a6a6a" stroke-width="1"/><path d="M1116.500 329.500 V345 L1120 341.800 L1122.500 347.300 L1124.800 346.300 L1122.400 341 L1127 341 Z" fill="#fff" stroke="#111" stroke-width="1"/></svg>
<div class="t" style="left:495px;width:60px;text-align:right;top:308.2px;height:20px;line-height:20px;font-size:15.500px;font-weight:500;color:#595959">计划<span style="display:inline-block;font-size:16.500px;font-weight:bold;transform:scaleX(0.76);transform-origin:right center;margin-left:-2.8px">E</span></div>
<div class="t" style="left:495px;width:60px;text-align:right;top:356.2px;height:20px;line-height:20px;font-size:15.500px;font-weight:500;color:#595959">计划<span style="display:inline-block;font-size:16.500px;font-weight:bold;transform:scaleX(0.88);transform-origin:right center;margin-left:-1.6px">D</span></div>
<div class="t" style="left:495px;width:60px;text-align:right;top:405.2px;height:20px;line-height:20px;font-size:15.500px;font-weight:500;color:#595959">计划<span style="display:inline-block;font-size:16.500px;font-weight:bold;transform:scaleX(0.84);transform-origin:right center;margin-left:-2.1px">C</span></div>
<div class="t" style="left:495px;width:60px;text-align:right;top:454.2px;height:20px;line-height:20px;font-size:15.500px;font-weight:500;color:#595959">计划<span style="display:inline-block;font-size:16.500px;font-weight:bold;transform:scaleX(0.86);transform-origin:right center;margin-left:-1.9px">B</span></div>
<div class="t" style="left:495px;width:60px;text-align:right;top:502.2px;height:20px;line-height:20px;font-size:15.500px;font-weight:500;color:#595959">计划<span style="display:inline-block;font-size:16.500px;font-weight:bold;transform:scaleX(0.86);transform-origin:right center;margin-left:-1.9px">A</span></div>
<div class="t" style="left:-4.200px;width:60px;text-align:right;top:192.5px;height:20px;line-height:20px;font-size:15.500px;font-weight:500;color:#333;transform:scale(0.240);transform-origin:right center">计划E</div>
<div class="t" style="left:-4.200px;width:60px;text-align:right;top:203.5px;height:20px;line-height:20px;font-size:15.500px;font-weight:500;color:#333;transform:scale(0.240);transform-origin:right center">计划D</div>
<div class="t" style="left:-4.200px;width:60px;text-align:right;top:214.5px;height:20px;line-height:20px;font-size:15.500px;font-weight:500;color:#333;transform:scale(0.240);transform-origin:right center">计划C</div>
<div class="t" style="left:-4.200px;width:60px;text-align:right;top:225.5px;height:20px;line-height:20px;font-size:15.500px;font-weight:500;color:#333;transform:scale(0.240);transform-origin:right center">计划B</div>
<div class="t" style="left:-4.200px;width:60px;text-align:right;top:236.5px;height:20px;line-height:20px;font-size:15.500px;font-weight:500;color:#333;transform:scale(0.240);transform-origin:right center">计划A</div>
<div class="t" style="left:1027.500px;top:288.5px;height:10px;line-height:10px;font-size:7.500px;color:#595959">1.2</div>
<div class="t" style="left:1027.500px;top:329.7px;height:10px;line-height:10px;font-size:7.500px;color:#595959">1</div>
<div class="t" style="left:1027.500px;top:369.7px;height:10px;line-height:10px;font-size:7.500px;color:#595959">0.8</div>
<div class="t" style="left:1027.500px;top:410.2px;height:10px;line-height:10px;font-size:7.500px;color:#595959">0.6</div>
<div class="t" style="left:1027.500px;top:450.7px;height:10px;line-height:10px;font-size:7.500px;color:#595959">0.4</div>
<div class="t" style="left:1027.500px;top:491.2px;height:10px;line-height:10px;font-size:7.500px;color:#595959">0.2</div>
<div class="t" style="left:1027.500px;top:531.7px;height:10px;line-height:10px;font-size:7.500px;color:#595959">0</div>
<div class="a" id="status"></div>
<div class="t" style="left:3px;top:676px;word-spacing:1.200px;color:#3a3a3a">幻灯片 第 1 张，共 1 张</div>
<div class="t" style="left:184px;top:676px;color:#3a3a3a">中文(中国)</div>
<div class="t" style="left:971px;top:676px;color:#222">备注</div>
<div class="t" style="left:1303px;top:676px;color:#333">50%</div>
<div class="a" style="left:1014px;top:674px;width:38px;height:19px;background:#c6c6c6"></div>
<svg style="left:0;top:0" width="1354" height="693" viewBox="0 0 1354 693"><path d="M158.200 678.600 V689 M158.200 678.600 Q157.500 677.700 156 677.700 H152.500 V687.300 H156 Q157.500 687.300 158.200 688.200 Q158.900 687.300 160.500 687.300 H164.500 V685.500 M158.200 678.600 Q158.900 677.700 160.500 677.700 H164.500 V679" fill="none" stroke="#5f5f5f" stroke-width="0.900"/><path d="M160.300 682.300 L162 684.300 L165.300 680.300" fill="none" stroke="#5f5f5f" stroke-width="1"/><path d="M957 685.500 h8 M955 688 h11 M955 690.500 h8" stroke="#5f5f5f" stroke-width="1"/><path d="M958.500 683 l2.500 -3.500 l2.500 3.500z" fill="#5f5f5f"/><rect x="1026.500" y="677.500" width="13" height="12" fill="none" stroke="#5f5f5f"/><path d="M1029.500 677.500 V689.500" stroke="#5f5f5f"/><rect x="1031.500" y="680.500" width="6" height="4" fill="none" stroke="#5f5f5f" stroke-width="0.900"/><rect x="1064" y="677.5" width="5" height="5" fill="none" stroke="#5f5f5f"/><rect x="1064" y="685.5" width="5" height="5" fill="none" stroke="#5f5f5f"/><rect x="1073" y="677.5" width="5" height="5" fill="none" stroke="#5f5f5f"/><rect x="1073" y="685.5" width="5" height="5" fill="none" stroke="#5f5f5f"/><path d="M1101.500 678 H1107 L1108 679 L1109 678 H1114.500 V689 H1109 L1108 690 L1107 689 H1101.500 Z M1108 679 V690" fill="none" stroke="#5f5f5f" stroke-width="0.900"/><path d="M1103 680.500h3.500M1103 682.500h3.500M1103 684.500h3.500M1103 686.500h3.500M1109.500 680.500h3.500M1109.500 682.500h3.500M1109.500 684.500h3.500M1109.500 686.500h3.500" stroke="#5f5f5f" stroke-width="0.800"/><path d="M1139.500 678.500 H1153.500 M1141 678.500 V684 Q1141 685.500 1142.500 685.500 H1150.500 Q1152 685.500 1152 684 V678.500 M1146.500 685.500 V689.500 M1143.500 689.500 H1149.500" fill="none" stroke="#5f5f5f" stroke-width="1"/><rect x="1143" y="680" width="7" height="2.500" fill="#5f5f5f" opacity="0.5"/><rect x="1171" y="683" width="6" height="1.500" fill="#5f5f5f"/><rect x="1181" y="683.500" width="100" height="1" fill="#a5a5a5"/><rect x="1230.500" y="681" width="1" height="6" fill="#a5a5a5"/><rect x="1203" y="678" width="4.500" height="11" fill="#6b6b6b"/><path d="M1284.500 683.800 h7 M1288 680.300 v7" stroke="#5f5f5f" stroke-width="1.400"/><rect x="1342.500" y="677.500" width="12" height="12" fill="none" stroke="#5f5f5f" stroke-width="0.900"/><path d="M1348.500 679 v3 M1348.500 685 v3 M1344 683.500 h3 M1350 683.500 h3" stroke="#5f5f5f" stroke-width="0.900"/><path d="M1347 680.500 l1.500 -1.500 l1.500 1.500 M1347 686.500 l1.500 1.500 l1.500 -1.500 M1345.500 682 l-1.500 1.500 l1.500 1.500 M1351.500 682 l1.500 1.500 l-1.500 1.500" fill="none" stroke="#5f5f5f" stroke-width="0.800"/></svg>
</body></html>
